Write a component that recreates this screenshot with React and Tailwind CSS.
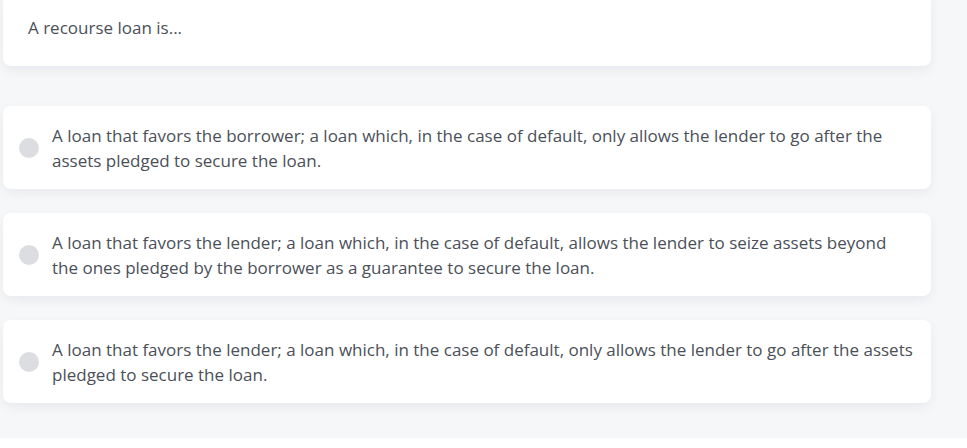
const options = [
    'A loan that favors the borrower; a loan which, in the case of default, only allows the lender to go after the assets pledged to secure the loan.',
    'A loan that favors the lender; a loan which, in the case of default, allows the lender to seize assets beyond the ones pledged by the borrower as a guarantee to secure the loan.',
    'A loan that favors the lender; a loan which, in the case of default, only allows the lender to go after the assets pledged to secure the loan.',
];

function Card({ children, className = '' }) {
    return (
        <div
            className={`w-[928px] rounded-lg bg-white shadow-[0_4px_12px_rgba(15,23,42,0.06)] ${className}`}
        >
            {children}
        </div>
    );
}

export default function App() {
    return (
        <div
            className="min-h-[448px] bg-[#f6f7f9] pl-[3px] text-[17px] text-[#4b5058]"
            style={{ fontFamily: '"Open Sans", "Noto Sans", sans-serif' }}
        >
            <Card className="-mt-[10px] px-[25px] pb-[26px] pt-[26px] leading-6">
                A recourse loan is...
            </Card>

            <div className="mt-[40px] flex flex-col gap-[24px]">
                {options.map((text) => (
                    <Card key={text} className="flex items-center pb-[16px] pl-[16px] pr-[17px] pt-[17px]">
                        <span className="h-5 w-5 shrink-0 rounded-full bg-[#dcdde0]" />
                        <p className="ml-[13px] leading-[25px]">{text}</p>
                    </Card>
                ))}
            </div>
        </div>
    );
}
